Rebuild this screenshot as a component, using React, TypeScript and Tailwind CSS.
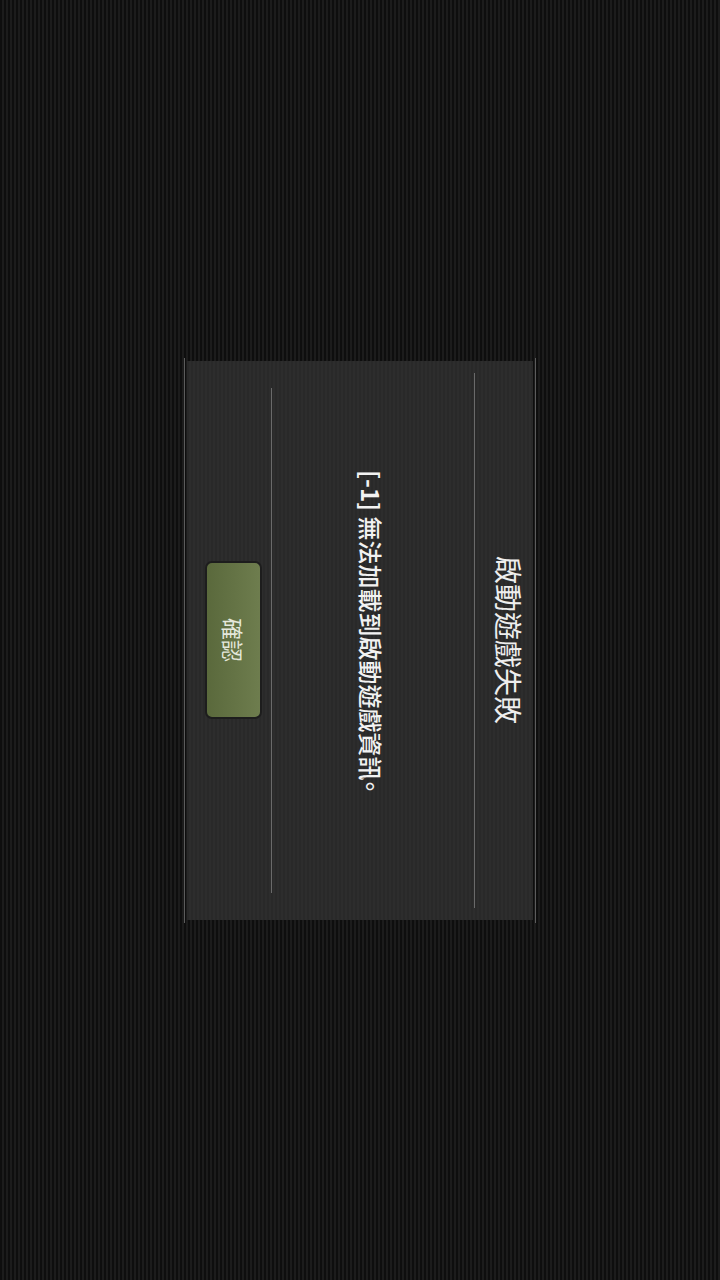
import React from "react";

export default function App() {
  return (
    <div className="w-[720px] h-[1280px] flex items-center justify-center bg-[#141414] bg-[repeating-linear-gradient(90deg,#0e0e0e_0px,#0e0e0e_2px,#1c1c1c_2px,#1c1c1c_4px)] font-['Noto_Sans_CJK_TC','Noto_Sans',sans-serif]">
      <div className="border-x border-[#5c5c5c] px-[2px] py-[3px]">
        <div className="w-[346px] h-[559px] bg-[#2a2a2a] bg-[repeating-linear-gradient(90deg,#292929_0px,#292929_2px,#2d2d2d_2px,#2d2d2d_4px)] [writing-mode:vertical-rl] [text-orientation:sideways] flex flex-col items-center">
          <div className="mr-[9px] text-[28px] leading-[30px] text-[#eeeeee] whitespace-nowrap">
            啟動遊戲失敗
          </div>
          <div className="mr-[19px] w-px h-[535px] bg-[#6a6a6a]" />
          <div className="mr-[88px] text-[24px] leading-[30px] text-[#f2f2f2] font-medium whitespace-nowrap -translate-y-[6px]">
            <span className="font-bold">[-1]</span> 無法加載到啟動遊戲資<span className="tracking-[-6px]">訊</span>。
          </div>
          <div className="mr-[84px] w-px h-[505px] bg-[#6a6a6a]" />
          <div className="mr-[9px] w-[57px] h-[158px] rounded-[7px] border-2 border-[#1d1d1d] bg-linear-to-l from-[#6e7d4e] to-[#5a693c] flex items-center justify-center">
            <span className="text-[22px] leading-[24px] text-[#e4e8dc]">確認</span>
          </div>
        </div>
      </div>
    </div>
  );
}
